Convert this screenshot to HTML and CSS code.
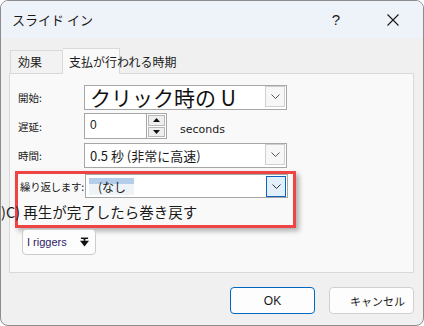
FILE: index.html
```html
<!DOCTYPE html>
<html lang="ja">
<head>
    <meta charset="UTF-8">
    <title>スライド イン</title>
    <link rel="stylesheet" href="styles.css">
</head>
<body>
    <div class="dialog">
        <div class="titlebar">
            <span class="title">スライド イン</span>
            <div class="title-actions">
                <span class="title-btn help">?</span>
                <span class="title-btn close">
                    <svg width="12" height="12" viewBox="0 0 12 12"><path d="M0.5 0.5 L11.5 11.5 M11.5 0.5 L0.5 11.5" stroke="#1a1a1a" stroke-width="1.1" fill="none"/></svg>
                </span>
            </div>
        </div>
        <div class="content">
            <div class="tabs">
                <div class="tab">効果</div>
                <div class="tab active">支払が行われる時期</div>
            </div>
            <div class="panel">
                <div class="row">
                    <span class="label">開始:</span>
                    <div class="combo">
                        <span class="combo-value big">クリック時の U</span>
                        <span class="drop"><svg width="9" height="5" viewBox="0 0 9 5"><path d="M0.5 0.5 L4.5 4.5 L8.5 0.5" fill="none" stroke="#555" stroke-width="1"/></svg></span>
                    </div>
                </div>
                <div class="row spin-row">
                    <span class="label">遅延:</span>
                    <div class="spinner">
                        <span class="spin-value">0</span>
                        <span class="spin-btns">
                            <span class="spin-btn"><svg width="7" height="4" viewBox="0 0 7 4"><polygon points="3.5,0 7,4 0,4" fill="#111"/></svg></span>
                            <span class="spin-btn"><svg width="7" height="4" viewBox="0 0 7 4"><polygon points="0,0 7,0 3.5,4" fill="#111"/></svg></span>
                        </span>
                    </div>
                    <span class="unit">seconds</span>
                </div>
                <div class="row">
                    <span class="label">時間:</span>
                    <div class="combo">
                        <span class="combo-value">0.5 秒 (非常に高速)</span>
                        <span class="drop"><svg width="9" height="5" viewBox="0 0 9 5"><path d="M0.5 0.5 L4.5 4.5 L8.5 0.5" fill="none" stroke="#555" stroke-width="1"/></svg></span>
                    </div>
                </div>
                <div class="highlight-box">
                    <div class="row repeat-row">
                        <span class="label">繰り返します:</span>
                        <div class="combo small">
                            <span class="combo-value"><span class="selected">(なし</span></span>
                            <span class="drop focused"><svg width="9" height="5" viewBox="0 0 9 5"><path d="M0.5 0.5 L4.5 4.5 L8.5 0.5" fill="none" stroke="#333" stroke-width="1"/></svg></span>
                        </div>
                    </div>
                    <div class="rewind">)C) 再生が完了したら巻き戻す</div>
                </div>
                <button class="triggers">
                    <span>I riggers</span>
                    <svg width="9" height="11" viewBox="0 0 10 11"><rect x="1" y="0" width="8" height="1.6" fill="#111"/><rect x="4" y="1.6" width="2" height="2" fill="#111"/><polygon points="0,3.6 10,3.6 5,10" fill="#111"/></svg>
                </button>
            </div>
            <div class="footer">
                <button class="btn primary">OK</button>
                <button class="btn cancel">キャンセル</button>
            </div>
        </div>
    </div>
</body>
</html>
```

FILE: styles.css
```css
* {
    margin: 0;
    padding: 0;
    box-sizing: border-box;
}
body {
    font-family: "Noto Sans CJK JP", "Noto Sans", sans-serif;
    background: #ffffff;
    color: #1a1a1a;
}
.dialog {
    width: 424px;
    height: 326px;
    border: 1px solid #8c8c8c;
    border-radius: 8px;
    background: #f0f0f0;
    overflow: hidden;
}
.titlebar {
    height: 37px;
    background: #eef3f9;
    display: flex;
    align-items: center;
    padding-left: 11px;
}
.title {
    font-size: 13px;
}
.title-actions {
    margin-left: auto;
    display: flex;
    gap: 11px;
    padding-right: 7px;
}
.title-btn {
    width: 46px;
    height: 30px;
    display: flex;
    align-items: center;
    justify-content: center;
}
.help {
    font-family: "Liberation Sans", sans-serif;
    font-size: 15px;
}
.content {
    padding: 10px 9px 0 8px;
}
.tabs {
    display: flex;
    align-items: flex-end;
    height: 25px;
    padding-left: 1px;
}
.tab {
    height: 23px;
    width: 53px;
    border: 1px solid #d9d9d9;
    border-bottom: none;
    background: #f2f2f2;
    font-size: 12px;
    line-height: 21px;
    padding-left: 7px;
    white-space: nowrap;
}
.tab.active {
    height: 26px;
    width: 57px;
    margin-bottom: -1px;
    background: #f9f9f9;
    padding-left: 6px;
    line-height: 25px;
    border-left: none;
    position: relative;
    z-index: 1;
}
.panel {
    height: 200px;
    border: 1px solid #d9d9d9;
    background: #f9f9f9;
    padding-top: 11px;
}
.row {
    display: flex;
    align-items: center;
    margin-left: 8px;
    margin-bottom: 3px;
}
.spin-row {
    margin-bottom: 4px;
}
.label {
    width: 66px;
    font-size: 10.5px;
    white-space: nowrap;
}
.combo {
    width: 203px;
    height: 25px;
    border: 1px solid #a6a6a6;
    background: #ffffff;
    display: flex;
    align-items: center;
    padding-right: 1px;
}
.combo-value {
    flex: 1;
    padding-left: 5px;
    font-size: 13px;
    white-space: nowrap;
}
.combo-value.big {
    font-size: 21px;
    line-height: 1;
    color: #111;
}
.drop {
    width: 20px;
    height: 21px;
    border: 1px solid #cfcfcf;
    background: #f7f7f7;
    display: flex;
    align-items: center;
    justify-content: center;
    align-self: flex-start;
}
.drop.focused {
    border-color: #0a64c0;
    background: #e3effb;
    margin-top: 1px;
}
.spinner {
    width: 83px;
    height: 26px;
    display: flex;
}
.spin-value {
    width: 63px;
    border: 1px solid #a6a6a6;
    background: #ffffff;
    font-family: "Liberation Sans", sans-serif;
    font-size: 12px;
    padding: 4px 0 0 5px;
}
.spin-btns {
    width: 20px;
    display: flex;
    flex-direction: column;
    border: 1px solid #a6a6a6;
    border-left: none;
    background: #ffffff;
    padding: 1px;
    gap: 1px;
}
.spin-btn {
    flex: 1;
    border: 1px solid #b8b8b8;
    background: #eeeeee;
    display: flex;
    align-items: center;
    justify-content: center;
}
.unit {
    font-family: "DejaVu Sans", sans-serif;
    font-size: 11px;
    margin: 6px 0 0 13px;
}
.highlight-box {
    width: 281px;
    height: 57px;
    margin-left: 5px;
    border: 3px solid #ef4444;
    box-shadow: 3px 3px 5px rgba(0, 0, 0, 0.3);
}
.repeat-row {
    margin: 0 0 0 2px;
}
.repeat-row .label {
    width: 65px;
    letter-spacing: -0.3px;
}
.combo.small {
    height: 24px;
}
.combo.small .drop {
    margin-top: 1px;
}
.selected {
    padding: 0 8px 0 9px;
    margin-left: -2px;
    font-size: 12px;
    background: linear-gradient(#b3cdea 0, #b3cdea 6px, #eef3f8 6px, #eef3f8 100%);
}
.rewind {
    margin-left: -17px;
    height: 27px;
    line-height: 27px;
    font-size: 14.5px;
    white-space: nowrap;
}
.triggers {
    margin: 1px 0 0 12px;
    width: 74px;
    height: 26px;
    border: 1px solid #cccccc;
    border-radius: 4px;
    background: #fdfdfd;
    display: flex;
    align-items: center;
    justify-content: space-between;
    padding: 0 6px 0 4px;
    font-family: "Liberation Sans", sans-serif;
    font-size: 11px;
    color: #2e1a66;
}
.footer {
    display: flex;
    justify-content: flex-end;
    gap: 14px;
    margin-top: 14px;
}
.btn {
    width: 85px;
    height: 27px;
    border: 1px solid #d0d0d0;
    border-radius: 4px;
    background: #fdfdfd;
    font-family: "Liberation Sans", "Noto Sans CJK JP", sans-serif;
    font-size: 12px;
    color: #1a1a1a;
}
.btn.primary {
    border-color: #0067c0;
}
.btn.cancel {
    font-size: 11px;
    padding-left: 12px;
}
```
